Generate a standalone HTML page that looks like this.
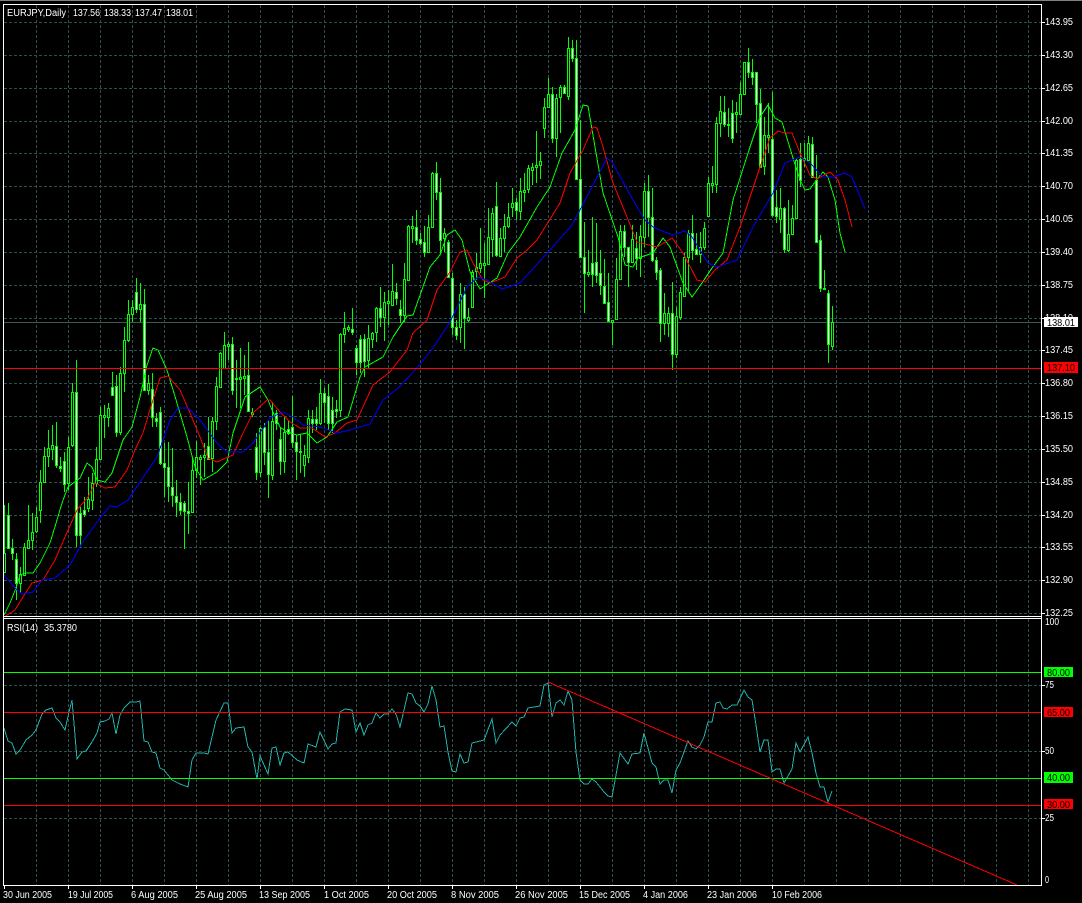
<!DOCTYPE html>
<html><head><meta charset="utf-8"><title>EURJPY,Daily</title>
<style>
html,body{margin:0;padding:0;background:#000;width:1082px;height:903px;overflow:hidden}
svg{display:block}
text{font-family:"Liberation Sans",sans-serif;font-size:10px;fill:#fff}
.c{shape-rendering:crispEdges}
</style></head><body>
<svg width="1082" height="903" viewBox="0 0 1082 903" xmlns="http://www.w3.org/2000/svg">
<rect width="1082" height="903" fill="#000"/>
<rect width="1082" height="1" fill="#808080"/>
<g class="c" fill="none">
<path stroke="#2f4f4f" stroke-dasharray="3 2" d="M4 22.5H1041M4 55.5H1041M4 88.5H1041M4 121.5H1041M4 153.5H1041M4 186.5H1041M4 219.5H1041M4 252.5H1041M4 285.5H1041M4 318.5H1041M4 350.5H1041M4 383.5H1041M4 416.5H1041M4 449.5H1041M4 482.5H1041M4 515.5H1041M4 547.5H1041M4 580.5H1041M4 613.5H1041M4 685.5H1041M4 751.5H1041M4 818.5H1041"/>
<path stroke="#2f4f4f" stroke-dasharray="3 2" d="M36.5 5V616M68.5 5V616M100.5 5V616M132.5 5V616M164.5 5V616M196.5 5V616M228.5 5V616M260.5 5V616M292.5 5V616M324.5 5V616M356.5 5V616M388.5 5V616M420.5 5V616M452.5 5V616M484.5 5V616M516.5 5V616M548.5 5V616M580.5 5V616M612.5 5V616M644.5 5V616M676.5 5V616M708.5 5V616M740.5 5V616M772.5 5V616M804.5 5V616M836.5 5V616M868.5 5V616M900.5 5V616M932.5 5V616M964.5 5V616M996.5 5V616M1028.5 5V616"/>
<path stroke="#2f4f4f" stroke-dasharray="3 2" d="M36.5 619V885M68.5 619V885M100.5 619V885M132.5 619V885M164.5 619V885M196.5 619V885M228.5 619V885M260.5 619V885M292.5 619V885M324.5 619V885M356.5 619V885M388.5 619V885M420.5 619V885M452.5 619V885M484.5 619V885M516.5 619V885M548.5 619V885M580.5 619V885M612.5 619V885M644.5 619V885M676.5 619V885M708.5 619V885M740.5 619V885M772.5 619V885M804.5 619V885M836.5 619V885M868.5 619V885M900.5 619V885M932.5 619V885M964.5 619V885M996.5 619V885M1028.5 619V885"/>
<path stroke="#3a5a55" d="M4 322.5H1041"/>

<path stroke="#00ff00" d="M4.5 505V572M8.5 503V548M12.5 539V560M16.5 553V600M20.5 567V593M24.5 543V575M28.5 505V548M32.5 513V550M36.5 507V533M40.5 470V523M44.5 447V483M48.5 430V467M52.5 425V460M56.5 422V468M60.5 457V472M64.5 452V492M68.5 437V490M72.5 383V447M76.5 360V547M80.5 507V547M84.5 497V517M88.5 477V512M92.5 473V510M96.5 447V487M100.5 407V460M104.5 405V438M108.5 403V427M112.5 372V395M116.5 375V437M120.5 367V435M124.5 327V392M128.5 300V342M132.5 300V322M136.5 278V313M140.5 283V322M144.5 289V390M148.5 375V395M152.5 373V427M156.5 413V427M160.5 407V465M164.5 443V497M168.5 442V502M172.5 448V507M176.5 480V517M180.5 493V515M184.5 501V549M188.5 482V534M192.5 458V513M196.5 441V478M200.5 455V485M204.5 443V477M208.5 417V460M212.5 417V472M216.5 377V430M220.5 352V388M224.5 332V368M228.5 342V360M232.5 337V395M236.5 360V408M240.5 348V408M244.5 355V395M248.5 342V412M252.5 408V417M256.5 433V480M260.5 427V477M264.5 423V465M268.5 420V498M272.5 402V480M276.5 410V430M280.5 427V475M284.5 417V473M288.5 420V435M292.5 396V448M296.5 435V480M300.5 435V473M304.5 445V477M308.5 410V463M312.5 410V433M316.5 407V430M320.5 379V425M324.5 388V423M328.5 384V430M332.5 397V433M336.5 400V418M340.5 333V417M344.5 312V343M348.5 325V332M352.5 308V335M356.5 345V375M360.5 335V373M364.5 334V377M368.5 325V368M372.5 332V348M376.5 307V342M380.5 287V327M384.5 292V341M388.5 290V325M392.5 264V305M396.5 283V305M400.5 300V323M404.5 263V322M408.5 225V280M412.5 216V243M416.5 210V245M420.5 233V245M424.5 226V257M428.5 215V253M432.5 172V228M436.5 162V200M440.5 178V253M444.5 228V252M448.5 240V278M452.5 273V335M456.5 320V340M460.5 283V343M464.5 287V349M468.5 308V322M472.5 270V308M476.5 253V280M480.5 228V273M484.5 243V298M488.5 208V263M492.5 208V257M496.5 182V257M500.5 228V257M504.5 214V252M508.5 203V228M512.5 188V217M516.5 198V220M520.5 178V220M524.5 173V202M528.5 165V193M532.5 163V185M536.5 131V183M540.5 152V179M544.5 98V138M548.5 78V108M552.5 87V143M556.5 94V157M560.5 85V133M564.5 85V94M568.5 37V100M572.5 40V62M576.5 40V180M580.5 120V258M584.5 222V313M588.5 250V277M592.5 217V287M596.5 223V283M600.5 250V295M604.5 259V303M608.5 273V322M612.5 320V345M616.5 258V320M620.5 225V280M624.5 225V257M628.5 247V287M632.5 225V263M636.5 232V270M640.5 225V277M644.5 183V247M648.5 175V237M652.5 188V262M656.5 257V280M660.5 268V342M664.5 293V335M668.5 307V337M672.5 282V370M676.5 307V358M680.5 287V320M684.5 253V296M688.5 230V292M692.5 215V260M696.5 233V255M700.5 232V263M704.5 222V250M708.5 177V216M712.5 166V193M716.5 117V193M720.5 96V137M724.5 96V127M728.5 108V137M732.5 100V143M736.5 102V133M740.5 82V113M744.5 62V94M748.5 48V78M752.5 59V85M756.5 72V123M760.5 89V167M764.5 117V175M768.5 103V153M772.5 92V217M776.5 190V223M780.5 188V233M784.5 207V253M788.5 200V252M792.5 205V235M796.5 158V218M800.5 143V187M804.5 143V167M808.5 136V158M812.5 137V178M816.5 155V243M820.5 235V292M824.5 270V290M828.5 290V363M832.5 306V350"/>

<path stroke="#00ff00" fill="#000" d="M3.5 553.5h2v19h-2zM19.5 574.5h2v9h-2zM23.5 547.5h2v28h-2zM27.5 540.5h2v8h-2zM31.5 532.5h2v8h-2zM35.5 517.5h2v14h-2zM39.5 482.5h2v28h-2zM43.5 456.5h2v26h-2zM47.5 448.5h2v8h-2zM51.5 445.5h2v4h-2zM67.5 447.5h2v36h-2zM71.5 392.5h2v53h-2zM87.5 499.5h2v9h-2zM91.5 483.5h2v17h-2zM95.5 459.5h2v24h-2zM99.5 415.5h2v44h-2zM103.5 415.5h2v2h-2zM107.5 408.5h2v9h-2zM119.5 373.5h2v59h-2zM123.5 340.5h2v33h-2zM127.5 314.5h2v26h-2zM131.5 307.5h2v7h-2zM139.5 304.5h2v5h-2zM147.5 383.5h2v7h-2zM191.5 470.5h2v42h-2zM195.5 457.5h2v13h-2zM199.5 457.5h2v2h-2zM203.5 455.5h2v2h-2zM211.5 421.5h2v37h-2zM215.5 386.5h2v35h-2zM219.5 353.5h2v34h-2zM223.5 345.5h2v23h-2zM227.5 344.5h2v2h-2zM235.5 378.5h2v1h-2zM239.5 377.5h2v2h-2zM243.5 376.5h2v2h-2zM251.5 412.5h2v2h-2zM259.5 428.5h2v44h-2zM271.5 421.5h2v54h-2zM283.5 432.5h2v29h-2zM303.5 455.5h2v10h-2zM307.5 418.5h2v39h-2zM319.5 393.5h2v30h-2zM339.5 334.5h2v76h-2zM343.5 328.5h2v6h-2zM347.5 327.5h2v2h-2zM367.5 338.5h2v22h-2zM371.5 333.5h2v6h-2zM375.5 308.5h2v24h-2zM383.5 302.5h2v15h-2zM387.5 301.5h2v2h-2zM391.5 291.5h2v14h-2zM403.5 279.5h2v36h-2zM407.5 226.5h2v54h-2zM411.5 226.5h2v2h-2zM427.5 227.5h2v25h-2zM431.5 173.5h2v54h-2zM443.5 233.5h2v5h-2zM459.5 294.5h2v33h-2zM467.5 317.5h2v3h-2zM471.5 272.5h2v35h-2zM475.5 267.5h2v4h-2zM479.5 263.5h2v5h-2zM483.5 263.5h2v2h-2zM487.5 237.5h2v27h-2zM491.5 213.5h2v26h-2zM499.5 238.5h2v18h-2zM503.5 226.5h2v12h-2zM507.5 217.5h2v9h-2zM511.5 203.5h2v4h-2zM519.5 191.5h2v20h-2zM523.5 190.5h2v2h-2zM527.5 168.5h2v21h-2zM531.5 167.5h2v3h-2zM535.5 165.5h2v2h-2zM539.5 161.5h2v4h-2zM543.5 107.5h2v21h-2zM547.5 94.5h2v13h-2zM555.5 98.5h2v40h-2zM559.5 87.5h2v10h-2zM567.5 48.5h2v48h-2zM587.5 272.5h2v2h-2zM611.5 320.5h2v2h-2zM615.5 279.5h2v40h-2zM619.5 231.5h2v48h-2zM631.5 239.5h2v23h-2zM639.5 236.5h2v22h-2zM643.5 191.5h2v46h-2zM663.5 313.5h2v10h-2zM667.5 313.5h2v10h-2zM675.5 316.5h2v38h-2zM679.5 292.5h2v25h-2zM683.5 257.5h2v39h-2zM687.5 233.5h2v24h-2zM699.5 247.5h2v7h-2zM703.5 228.5h2v19h-2zM707.5 183.5h2v33h-2zM711.5 183.5h2v2h-2zM715.5 123.5h2v61h-2zM719.5 111.5h2v12h-2zM727.5 124.5h2v1h-2zM735.5 112.5h2v2h-2zM739.5 94.5h2v20h-2zM743.5 62.5h2v32h-2zM763.5 135.5h2v31h-2zM767.5 135.5h2v2h-2zM779.5 208.5h2v11h-2zM787.5 234.5h2v16h-2zM791.5 218.5h2v16h-2zM795.5 160.5h2v58h-2zM803.5 158.5h2v2h-2zM807.5 143.5h2v17h-2zM823.5 288.5h2v1h-2zM831.5 322.5h2v24h-2z"/>

<path stroke="#00ff00" fill="#fff" d="M7.5 515.5h2v33h-2zM11.5 548.5h2v5h-2zM15.5 559.5h2v24h-2zM55.5 446.5h2v19h-2zM59.5 466.5h2v2h-2zM63.5 461.5h2v23h-2zM75.5 392.5h2v143h-2zM79.5 513.5h2v22h-2zM83.5 510.5h2v4h-2zM111.5 387.5h2v8h-2zM115.5 386.5h2v46h-2zM135.5 292.5h2v17h-2zM143.5 304.5h2v86h-2zM151.5 389.5h2v28h-2zM155.5 418.5h2v3h-2zM159.5 412.5h2v51h-2zM163.5 463.5h2v4h-2zM167.5 467.5h2v19h-2zM171.5 487.5h2v8h-2zM175.5 496.5h2v6h-2zM179.5 502.5h2v8h-2zM183.5 503.5h2v8h-2zM187.5 511.5h2v2h-2zM207.5 446.5h2v13h-2zM231.5 344.5h2v46h-2zM247.5 375.5h2v36h-2zM255.5 447.5h2v25h-2zM263.5 427.5h2v25h-2zM267.5 452.5h2v22h-2zM275.5 413.5h2v10h-2zM279.5 439.5h2v22h-2zM287.5 429.5h2v4h-2zM291.5 427.5h2v15h-2zM295.5 442.5h2v9h-2zM299.5 451.5h2v1h-2zM311.5 419.5h2v4h-2zM315.5 419.5h2v4h-2zM323.5 393.5h2v9h-2zM327.5 396.5h2v27h-2zM331.5 410.5h2v13h-2zM335.5 409.5h2v2h-2zM351.5 329.5h2v3h-2zM355.5 348.5h2v14h-2zM359.5 339.5h2v23h-2zM363.5 339.5h2v22h-2zM379.5 308.5h2v9h-2zM395.5 292.5h2v6h-2zM399.5 309.5h2v6h-2zM415.5 227.5h2v13h-2zM419.5 239.5h2v4h-2zM423.5 242.5h2v10h-2zM435.5 173.5h2v19h-2zM439.5 192.5h2v48h-2zM447.5 242.5h2v35h-2zM451.5 278.5h2v49h-2zM455.5 327.5h2v8h-2zM463.5 294.5h2v24h-2zM495.5 206.5h2v49h-2zM515.5 202.5h2v8h-2zM551.5 94.5h2v44h-2zM563.5 87.5h2v6h-2zM571.5 48.5h2v10h-2zM575.5 58.5h2v121h-2zM579.5 179.5h2v78h-2zM583.5 257.5h2v16h-2zM591.5 263.5h2v11h-2zM595.5 262.5h2v13h-2zM599.5 273.5h2v12h-2zM603.5 286.5h2v17h-2zM607.5 302.5h2v19h-2zM623.5 231.5h2v16h-2zM627.5 247.5h2v15h-2zM635.5 248.5h2v10h-2zM647.5 191.5h2v26h-2zM651.5 217.5h2v43h-2zM655.5 260.5h2v12h-2zM659.5 270.5h2v53h-2zM671.5 313.5h2v41h-2zM691.5 233.5h2v17h-2zM695.5 249.5h2v5h-2zM723.5 112.5h2v12h-2zM731.5 113.5h2v25h-2zM747.5 62.5h2v10h-2zM751.5 72.5h2v5h-2zM755.5 72.5h2v32h-2zM759.5 103.5h2v64h-2zM771.5 139.5h2v76h-2zM775.5 207.5h2v9h-2zM783.5 208.5h2v41h-2zM799.5 159.5h2v21h-2zM811.5 144.5h2v33h-2zM815.5 180.5h2v62h-2zM819.5 240.5h2v48h-2zM827.5 293.5h2v51h-2z"/>

<polyline stroke="#00ff00" points="4,615 10,603 16,588 20,575 25,573 33,573 40,563 50,543 57,520 62,503 68,487 80,478 87,463 92,467 97,480 105,482 112,473 123,440 132,427 140,397 147,365 153,348 158,350 167,370 177,403 187,437 195,467 203,480 217,472 227,462 233,433 245,397 260,387 268,400 272,410 280,427 287,432 297,435 307,433 317,443 327,437 337,422 348,417 360,377 365,367 383,357 393,337 407,316 413,315 430,267 440,255 447,235 455,230 462,240 470,272 480,289 497,278 508,253 520,237 537,207 550,187 562,153 575,130 583,105 588,106 595,147 603,193 618,237 625,265 633,267 638,258 653,253 663,238 670,247 683,283 692,297 702,283 712,268 723,253 733,200 750,147 760,117 768,105 775,118 782,122 793,158 800,180 805,190 810,189 818,178 823,172 828,177 835,200 840,233 845,252"/>
<polyline stroke="#ff0000" points="4,617 15,610 23,597 32,583 43,580 55,560 65,537 77,510 88,497 95,483 105,488 115,487 127,470 135,450 143,433 152,403 160,378 168,376 180,390 190,413 200,437 208,458 217,462 233,455 243,433 253,413 267,400 270,400 280,412 290,422 300,428 312,428 325,437 335,433 347,423 357,420 373,385 390,372 407,350 413,333 427,320 437,290 450,272 460,252 467,250 473,263 483,280 490,283 505,277 517,258 527,250 537,240 560,203 570,173 583,150 593,127 597,128 603,147 613,183 627,217 637,242 657,247 672,238 683,253 697,280 705,282 715,270 727,260 740,227 760,167 770,138 778,131 785,133 792,133 800,153 810,175 817,179 830,172 838,180 845,200 852,227"/>
<polyline stroke="#0000ff" points="4,575 17,590 22,594 33,592 42,580 55,578 70,565 82,543 100,518 110,506 117,507 128,500 140,482 157,457 170,420 178,408 188,408 200,420 217,443 227,452 243,452 253,443 270,418 283,412 293,417 303,425 320,427 337,433 350,430 370,424 383,400 398,388 417,368 433,348 450,322 467,287 478,277 487,280 502,289 520,283 530,272 550,250 572,225 592,187 607,158 612,162 622,180 633,200 645,220 653,227 672,235 685,231 692,237 708,263 717,267 737,260 753,227 773,193 785,163 800,157 810,163 823,177 833,177 845,173 852,177 865,209"/>

<path stroke="#ff0000" d="M4 368.5H1041"/>

<polyline stroke="#20b2aa" points="4,728 8,741 12,743 16,754 20,750 26,740 32,735 36,730 42,714 46,710 52,708 56,718 60,722 65,730 69,712 72,700 77,759 82,752 86,751 92,742 97,733 100,722 105,721 109,719 112,713 116,734 120,715 124,708 130,702 136,702 140,701 144,741 148,742 152,752 156,753 160,768 164,770 172,780 180,784 188,787 192,760 196,753 204,753 208,754 216,720 224,703 228,703 232,733 236,728 244,727 248,747 252,752 257,779 260,756 268,774 272,748 276,747 280,765 284,753 288,752 297,760 304,763 308,744 316,747 320,732 328,749 332,744 336,743 340,712 345,709 352,710 356,732 360,723 364,735 368,725 372,723 376,713 380,718 384,714 388,714 392,709 396,714 400,727 408,693 412,694 416,703 420,706 424,712 428,704 432,686 436,700 440,727 444,726 448,752 452,771 456,772 460,754 464,763 468,762 472,743 476,742 484,740 492,719 496,743 500,735 512,722 516,726 520,718 524,717 528,708 540,706 544,685 548,683 552,717 556,703 560,700 564,705 568,691 572,700 576,752 580,780 584,784 588,784 592,779 596,782 604,792 608,796 612,797 620,753 628,764 632,754 640,753 644,733 652,763 656,767 660,784 664,780 668,780 672,793 676,770 680,763 688,741 692,747 696,749 700,745 704,737 708,722 712,722 716,703 720,702 723,708 727,709 732,705 737,705 744,690 748,697 752,700 756,725 760,752 764,740 768,740 772,772 776,769 780,769 784,783 792,769 796,743 800,752 808,737 812,753 816,773 820,787 824,787 828,802 832,791"/>
<path stroke="#00ff00" d="M4 672.5H1041M4 778.5H1041"/>
<path stroke="#ff0000" d="M4 712.5H1041M4 805.5H1041"/>
<path stroke="#ff0000" d="M548 682L1017 885"/>

<path stroke="#ffffff" d="M3 4.5H1042M3 616.5H1042M3 618.5H1042M3 885.5H1042M3.5 4V886M1041.5 4V886"/>
<path stroke="#ffffff" d="M1042 22.5h3M1042 55.5h3M1042 88.5h3M1042 121.5h3M1042 153.5h3M1042 186.5h3M1042 219.5h3M1042 252.5h3M1042 285.5h3M1042 318.5h3M1042 350.5h3M1042 383.5h3M1042 416.5h3M1042 449.5h3M1042 482.5h3M1042 515.5h3M1042 547.5h3M1042 580.5h3M1042 613.5h3M1042 685.5h3M1042 751.5h3M1042 818.5h3M4.5 886v3M68.5 886v3M132.5 886v3M196.5 886v3M260.5 886v3M324.5 886v3M388.5 886v3M452.5 886v3M516.5 886v3M580.5 886v3M644.5 886v3M708.5 886v3M772.5 886v3"/>
</g>

<text x="7" y="16" textLength="59" lengthAdjust="spacingAndGlyphs">EURJPY,Daily</text>
<text x="73" y="16" textLength="27" lengthAdjust="spacingAndGlyphs">137.56</text>
<text x="104" y="16" textLength="27" lengthAdjust="spacingAndGlyphs">138.33</text>
<text x="135" y="16" textLength="27" lengthAdjust="spacingAndGlyphs">137.47</text>
<text x="166" y="16" textLength="27" lengthAdjust="spacingAndGlyphs">138.01</text>
<text x="7" y="631" textLength="31" lengthAdjust="spacingAndGlyphs">RSI(14)</text>
<text x="44" y="631" textLength="33" lengthAdjust="spacingAndGlyphs">35.3780</text>

<g>
<text x="1045" y="25" textLength="28" lengthAdjust="spacingAndGlyphs">143.95</text>
<text x="1045" y="58" textLength="28" lengthAdjust="spacingAndGlyphs">143.30</text>
<text x="1045" y="91" textLength="28" lengthAdjust="spacingAndGlyphs">142.65</text>
<text x="1045" y="124" textLength="28" lengthAdjust="spacingAndGlyphs">142.00</text>
<text x="1045" y="156" textLength="28" lengthAdjust="spacingAndGlyphs">141.35</text>
<text x="1045" y="189" textLength="28" lengthAdjust="spacingAndGlyphs">140.70</text>
<text x="1045" y="222" textLength="28" lengthAdjust="spacingAndGlyphs">140.05</text>
<text x="1045" y="255" textLength="28" lengthAdjust="spacingAndGlyphs">139.40</text>
<text x="1045" y="288" textLength="28" lengthAdjust="spacingAndGlyphs">138.75</text>
<text x="1045" y="321" textLength="28" lengthAdjust="spacingAndGlyphs">138.10</text>
<text x="1045" y="353" textLength="28" lengthAdjust="spacingAndGlyphs">137.45</text>
<text x="1045" y="386" textLength="28" lengthAdjust="spacingAndGlyphs">136.80</text>
<text x="1045" y="419" textLength="28" lengthAdjust="spacingAndGlyphs">136.15</text>
<text x="1045" y="452" textLength="28" lengthAdjust="spacingAndGlyphs">135.50</text>
<text x="1045" y="485" textLength="28" lengthAdjust="spacingAndGlyphs">134.85</text>
<text x="1045" y="518" textLength="28" lengthAdjust="spacingAndGlyphs">134.20</text>
<text x="1045" y="550" textLength="28" lengthAdjust="spacingAndGlyphs">133.55</text>
<text x="1045" y="583" textLength="28" lengthAdjust="spacingAndGlyphs">132.90</text>
<text x="1045" y="616" textLength="28" lengthAdjust="spacingAndGlyphs">132.25</text>
<text x="1045" y="625" textLength="14" lengthAdjust="spacingAndGlyphs">100</text>
<text x="1045" y="688" textLength="9" lengthAdjust="spacingAndGlyphs">75</text>
<text x="1045" y="754" textLength="9" lengthAdjust="spacingAndGlyphs">50</text>
<text x="1045" y="821" textLength="9" lengthAdjust="spacingAndGlyphs">25</text>
<text x="1045" y="883" textLength="4" lengthAdjust="spacingAndGlyphs">0</text>
</g>

<rect class="c" x="1044" y="317" width="34" height="10" fill="#fff"/>
<text x="1047" y="326" textLength="28" lengthAdjust="spacingAndGlyphs" style="fill:#000">138.01</text>
<rect class="c" x="1044" y="362" width="34" height="11" fill="#f00"/>
<text x="1047" y="371" textLength="28" lengthAdjust="spacingAndGlyphs" style="fill:#000">137.10</text>
<rect class="c" x="1044" y="667" width="29" height="10" fill="#0f0"/>
<text x="1047" y="676" textLength="23" lengthAdjust="spacingAndGlyphs" style="fill:#000">80.00</text>
<rect class="c" x="1044" y="707" width="29" height="10" fill="#f00"/>
<text x="1047" y="716" textLength="23" lengthAdjust="spacingAndGlyphs" style="fill:#000">65.00</text>
<rect class="c" x="1044" y="772" width="29" height="11" fill="#0f0"/>
<text x="1047" y="781" textLength="23" lengthAdjust="spacingAndGlyphs" style="fill:#000">40.00</text>
<rect class="c" x="1044" y="799" width="29" height="10" fill="#f00"/>
<text x="1047" y="808" textLength="23" lengthAdjust="spacingAndGlyphs" style="fill:#000">30.00</text>

<g>
<text x="3" y="898" textLength="49" lengthAdjust="spacingAndGlyphs">30 Jun 2005</text>
<text x="68" y="898" textLength="45" lengthAdjust="spacingAndGlyphs">19 Jul 2005</text>
<text x="131" y="898" textLength="47" lengthAdjust="spacingAndGlyphs">6 Aug 2005</text>
<text x="195" y="898" textLength="52" lengthAdjust="spacingAndGlyphs">25 Aug 2005</text>
<text x="259" y="898" textLength="51" lengthAdjust="spacingAndGlyphs">13 Sep 2005</text>
<text x="324" y="898" textLength="45" lengthAdjust="spacingAndGlyphs">1 Oct 2005</text>
<text x="387" y="898" textLength="50" lengthAdjust="spacingAndGlyphs">20 Oct 2005</text>
<text x="451" y="898" textLength="48" lengthAdjust="spacingAndGlyphs">8 Nov 2005</text>
<text x="515" y="898" textLength="53" lengthAdjust="spacingAndGlyphs">26 Nov 2005</text>
<text x="579" y="898" textLength="51" lengthAdjust="spacingAndGlyphs">15 Dec 2005</text>
<text x="643" y="898" textLength="45" lengthAdjust="spacingAndGlyphs">4 Jan 2006</text>
<text x="707" y="898" textLength="50" lengthAdjust="spacingAndGlyphs">23 Jan 2006</text>
<text x="772" y="898" textLength="50" lengthAdjust="spacingAndGlyphs">10 Feb 2006</text>
</g>
</svg>
</body></html>
